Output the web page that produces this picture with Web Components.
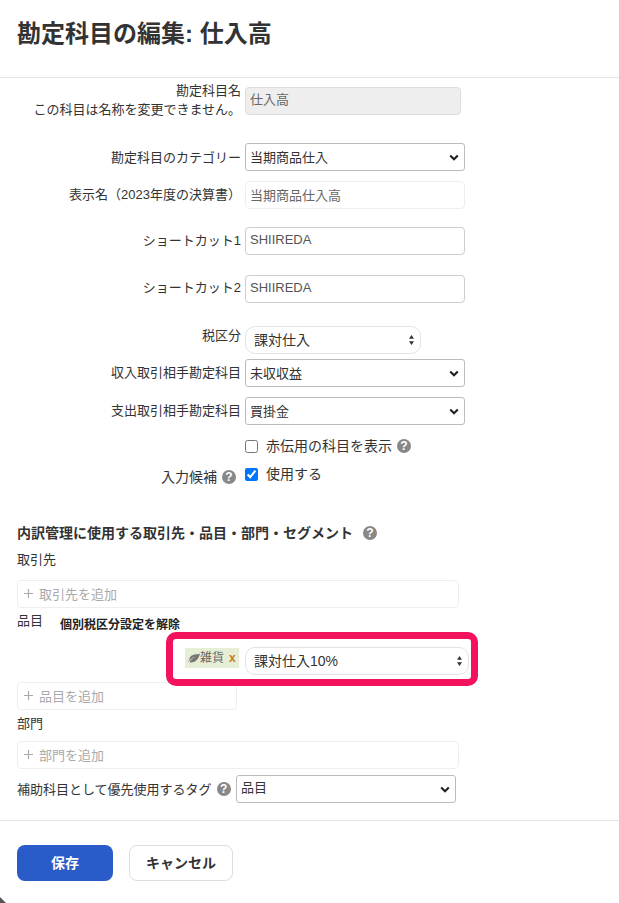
<!DOCTYPE html>
<html lang="ja">
<head>
<meta charset="utf-8">
<title>勘定科目の編集</title>
<style>
html,body{margin:0;padding:0;background:#fff;}
body{font-family:"Liberation Sans","Noto Sans CJK JP",sans-serif;color:#333;font-size:13px;}
</style>
</head>
<body>
<account-dialog>
  <span slot="title">勘定科目の編集: 仕入高</span>

  <form-row style="--mt:3px;--ctrl-top:6px">
    <span slot="label">勘定科目名<br>この科目は名称を変更できません。</span>
    <ui-input value="仕入高" width="216" disabled></ui-input>
  </form-row>
  <form-row style="--mt:24px;--label-top:5px">
    <span slot="label">勘定科目のカテゴリー</span>
    <ui-select value="当期商品仕入"></ui-select>
  </form-row>
  <form-row style="--mt:10px;--label-top:4px">
    <span slot="label">表示名（2023年度の決算書）</span>
    <ui-input value="当期商品仕入高" width="220" soft></ui-input>
  </form-row>
  <form-row style="--mt:18px;--label-top:4px">
    <span slot="label">ショートカット1</span>
    <ui-input value="SHIIREDA" width="220"></ui-input>
  </form-row>
  <form-row style="--mt:20px;--label-top:3px">
    <span slot="label">ショートカット2</span>
    <ui-input value="SHIIREDA" width="220"></ui-input>
  </form-row>
  <form-row style="--mt:23px">
    <span slot="label">税区分</span>
    <ui-select value="課対仕入" width="176" round></ui-select>
  </form-row>
  <form-row style="--mt:5px;--label-top:4px">
    <span slot="label">収入取引相手勘定科目</span>
    <ui-select value="未収収益"></ui-select>
  </form-row>
  <form-row style="--mt:10px;--label-top:4px">
    <span slot="label">支出取引相手勘定科目</span>
    <ui-select value="買掛金"></ui-select>
  </form-row>
  <form-row style="--mt:9px">
    <ui-check>赤伝用の科目を表示<help-dot slot="after"></help-dot></ui-check>
  </form-row>
  <form-row style="--mt:4px;--label-top:6px;--label-size:14px">
    <span slot="label">入力候補<help-dot style="margin:0 5px 0 5px"></help-dot></span>
    <ui-check checked>使用する</ui-check>
  </form-row>

  <section-title>内訳管理に使用する取引先・品目・部門・セグメント<help-dot slot="after"></help-dot></section-title>
  <plain-label style="--mt:7px">取引先</plain-label>
  <tag-box style="--mt:11px">取引先を追加</tag-box>

  <item-head></item-head>
  <tax-override></tax-override>
  <tag-box width="220" style="--mt:-4px">品目を追加</tag-box>
  <plain-label style="--mt:4px">部門</plain-label>
  <tag-box style="--mt:8px">部門を追加</tag-box>
  <priority-row></priority-row>

  <button-bar></button-bar>
</account-dialog>

<script>
function def(name, html, init){
  customElements.define(name, class extends HTMLElement{
    constructor(){
      super();
      const r=this.attachShadow({mode:'open'});
      r.innerHTML=html;
    }
    connectedCallback(){ if(init) init(this,this.shadowRoot); }
  });
}

const chevron='<svg class="arrow" style="margin-right:1px" width="10" height="7" viewBox="0 0 10 7" aria-hidden="true"><path d="M1.2 1.4 5 5.2l3.8-3.8" fill="none" stroke="#222" stroke-width="2.1"/></svg>';
const updown='<svg class="arrow" width="5" height="10" viewBox="0 0 5 10" aria-hidden="true"><path d="M2.5 0 5 3.8H0zM2.5 10 0 6.2h5z" fill="#333"/></svg>';

def('account-dialog',`
<style>
:host{display:block;width:619px;height:903px;position:relative;overflow:hidden;background:#fff;}
header{box-sizing:content-box;height:60px;padding:17px 17px 0;border-bottom:1px solid #e5e5e5;}
h2{margin:0;font:bold 24px/34px "Liberation Sans","Noto Sans CJK JP",sans-serif;color:#333;}
.corner{position:absolute;left:0;bottom:0;width:6px;height:6px;background:#555;clip-path:polygon(0 0,0 100%,100% 100%);}
</style>
<header><h2><slot name="title"></slot></h2></header>
<slot></slot>
<div class="corner"></div>`);

def('form-row',`
<style>
:host{display:grid;grid-template-columns:241px auto;column-gap:4px;align-items:start;margin-top:var(--mt,0);}
.l{text-align:right;font-size:var(--label-size,13px);line-height:19px;padding-top:var(--label-top,0);color:#333;white-space:nowrap;}
.c{padding-top:var(--ctrl-top,0);display:flex;}
</style>
<div class="l"><slot name="label"></slot></div><div class="c"><slot></slot></div>`);

def('ui-input',`
<style>
:host{display:block;}
.f{box-sizing:border-box;height:28px;padding:0 4px;line-height:24px;font-size:13px;color:#555;background:#fff;border:1px solid #ccc;border-radius:4px;white-space:nowrap;}
.f.disabled{background:#eee;border-color:#ddd;color:#666;}
.f.soft{border-color:#eee;line-height:28px;color:#666;}
</style>
<div class="f"></div>`,(h,r)=>{
  const f=r.querySelector('.f');
  f.textContent=h.getAttribute('value');
  f.style.width=h.getAttribute('width')+'px';
  if(h.hasAttribute('disabled'))f.classList.add('disabled');
  if(h.hasAttribute('soft'))f.classList.add('soft');
});

def('ui-select',`
<style>
:host{display:block;}
.s{box-sizing:border-box;width:220px;height:28px;display:flex;align-items:center;justify-content:space-between;padding:0 4px 0 4px;font-size:13px;color:#333;background:#fff;border:1px solid #bbb;border-radius:3px;white-space:nowrap;}
.s.round{padding:0 6px 0 8px;font-size:14px;border-color:#e3e3e3;border-radius:10px;}
.arrow{display:block;flex:none;}
.a{display:block;}
.v{display:block;margin-top:-2px;}
</style>
<div class="s"><span class="v"></span><span class="a"></span></div>`,(h,r)=>{
  const s=r.querySelector('.s');
  r.querySelector('.v').textContent=h.getAttribute('value');
  const round=h.hasAttribute('round');
  r.querySelector('.a').innerHTML=round?updown:chevron;
  if(round)s.classList.add('round');
  if(h.hasAttribute('width'))s.style.width=h.getAttribute('width')+'px';
});

def('help-dot',`
<style>
:host{display:inline-block;vertical-align:1px;width:14px;height:14px;border-radius:50%;background:#888;color:#fff;font:bold 12px/14px "Liberation Sans",sans-serif;text-align:center;}
</style>?`);

def('ui-check',`
<style>
:host{display:flex;align-items:center;height:24px;font-size:14px;line-height:20px;color:#333;white-space:nowrap;}
input{margin:0 8px 0 0;width:13px;height:13px;accent-color:#0075ff;flex:none;}
::slotted(help-dot){margin-left:5px;}
</style>
<input type="checkbox" aria-label="option"><slot></slot><slot name="after"></slot>`,(h,r)=>{
  r.querySelector('input').checked=h.hasAttribute('checked');
});

def('section-title',`
<style>
:host{display:flex;align-items:center;margin:36px 0 0 17px;font-weight:bold;font-size:14px;line-height:20px;color:#333;white-space:nowrap;}
::slotted(help-dot){margin-left:10px;}
</style>
<slot></slot><slot name="after"></slot>`);

def('plain-label',`
<style>:host{display:block;margin:var(--mt,0) 0 0 17px;font-size:13px;line-height:19px;color:#333;}</style><slot></slot>`);

def('tag-box',`
<style>
:host{display:block;margin:var(--mt,0) 0 0 17px;}
.b{box-sizing:border-box;width:442px;height:28px;padding:0 6px 2px;display:flex;align-items:center;gap:6px;border:1px solid #eee;border-radius:4px;font-size:13px;color:#aaa;background:#fff;white-space:nowrap;}
svg{display:block;flex:none;}
</style>
<div class="b"><svg width="9" height="9" viewBox="0 0 9 9" aria-hidden="true"><path d="M4.5 0v9M0 4.5h9" stroke="#aaa" stroke-width="1.2" fill="none"/></svg><span><slot></slot></span></div>`,(h,r)=>{
  if(h.hasAttribute('width'))r.querySelector('.b').style.width=h.getAttribute('width')+'px';
});

def('item-head',`
<style>
:host{display:flex;align-items:flex-start;margin:3px 0 0 17px;height:22px;}
.n{font-size:13px;line-height:19px;color:#333;width:43px;}
.a{font-size:12px;font-weight:bold;line-height:18px;padding-top:5px;color:#222;white-space:nowrap;}
</style>
<span class="n">品目</span><span class="a">個別税区分設定を解除</span>`);

def('tax-override',`
<style>
:host{display:block;margin:-1px 0 0 166px;width:312px;height:54px;position:relative;}
.row{display:flex;align-items:flex-start;box-sizing:border-box;height:54px;padding:15px 0 0 19px;}
.tag{box-sizing:border-box;width:54px;height:20px;margin:1px 6px 0 0;display:flex;align-items:center;background:#e6efd6;color:#666;font-size:12px;line-height:20px;padding-left:3px;white-space:nowrap;}
.tag svg{flex:none;display:block;}
.x{color:#c9792b;font-weight:bold;font-size:12px;margin-left:5px;font-family:"Liberation Sans",sans-serif;}
.mark{position:absolute;inset:0;box-sizing:border-box;border:7px solid #f3125c;border-radius:10px;pointer-events:none;}
</style>
<div class="row">
  <span class="tag"><svg width="12" height="10" viewBox="0 0 12 10" aria-hidden="true"><path d="M0 9.6C1.4 7 3.6 5 7 3.8 4.4 5.4 2.6 7 1.6 9.2 4.6 9.8 9.8 9.4 12 .6 9 2 2.4.4 1.2 6.4.7 7.4.3 8.5 0 9.6z" fill="#777"/></svg>雑貨<span class="x">x</span></span>
  <ui-select value="課対仕入10%" width="224" round></ui-select>
</div>
<div class="mark"></div>`);

def('priority-row',`
<style>
:host{display:flex;align-items:flex-start;margin:6px 0 0 17px;font-size:13px;line-height:19px;color:#333;white-space:nowrap;}
.l{padding-top:5px;width:219px;}
help-dot{margin-left:5px;}
.s{box-sizing:border-box;width:220px;height:28px;display:flex;align-items:flex-start;justify-content:space-between;padding:1px 5px 0 4px;border:1px solid #bbb;border-radius:3px;line-height:22px;}
svg{margin-top:9px;display:block;}
</style>
<span class="l">補助科目として優先使用するタグ<help-dot></help-dot></span>
<div class="s"><span>品目</span><svg width="10" height="7" viewBox="0 0 10 7" aria-hidden="true"><path d="M1.2 1.4 5 5.2l3.8-3.8" fill="none" stroke="#222" stroke-width="2.1"/></svg></div>`);

def('button-bar',`
<style>
:host{display:flex;gap:16px;margin-top:17px;padding:24px 17px 0;border-top:1px solid #e5e5e5;}
div{box-sizing:border-box;height:36px;border-radius:8px;font-weight:bold;font-size:14px;line-height:36px;text-align:center;}
.p{width:96px;background:#2a5cc9;color:#fff;}
.c{width:104px;background:#fff;color:#333;border:1px solid #ddd;line-height:34px;}
</style>
<div class="p">保存</div><div class="c">キャンセル</div>`);
</script>
</body>
</html>
